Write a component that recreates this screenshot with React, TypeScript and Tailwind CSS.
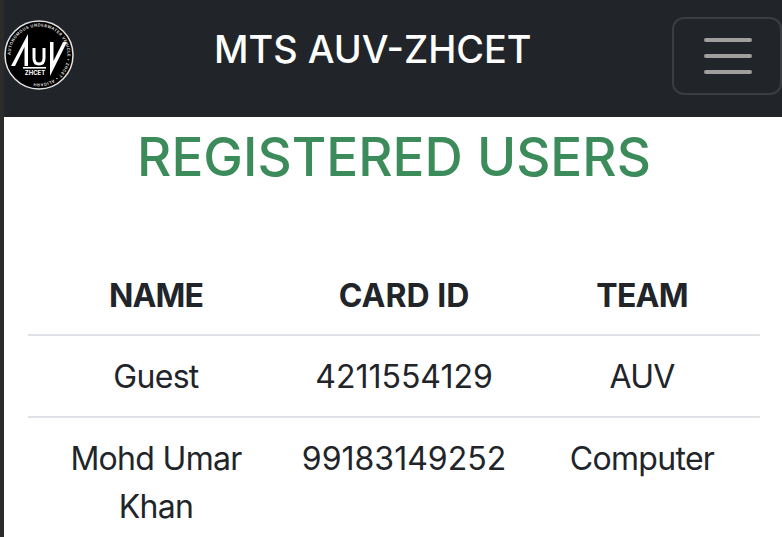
const users = [
  { name: 'Guest', cardId: '4211554129', team: 'AUV' },
  { name: 'Mohd Umar Khan', cardId: '99183149252', team: 'Computer' },
];

function Logo() {
  return (
    <svg width="70" height="70" viewBox="0 0 70 70" className="shrink-0">
      <circle cx="35" cy="35" r="34" fill="#000" stroke="#e2e2e2" strokeWidth="1.5" />
      <defs>
        <path id="ring" d="M35 35 m-28.5 0 a28.5 28.5 0 1 1 57 0 a28.5 28.5 0 1 1 -57 0" />
      </defs>
      <text fontSize="4" fontWeight="600" fill="#e8e8e8" fontFamily="Inter, sans-serif" letterSpacing="0.5">
        <textPath href="#ring">AUTONOMOUS UNDERWATER VEHICLE • ZHCET • ALIGARH</textPath>
      </text>
      <path d="M7 46 L24 14 L24 46 L20.5 46 L20.5 27 L11 46 Z" fill="#fff" />
      <path d="M63 22 L46 56 L46 22 L49.5 22 L49.5 41 L59 22 Z" fill="#fff" />
      <path d="M30 28 V38 Q30 44 35 44 Q40 44 40 38 V28" fill="none" stroke="#fff" strokeWidth="3" />
      <rect x="19" y="47" width="23" height="1.6" fill="#fff" />
      <text x="31" y="55" textAnchor="middle" fontSize="6" fontWeight="700" fill="#fff" fontFamily="Inter, sans-serif">
        ZHCET
      </text>
    </svg>
  );
}

export default function App() {
  return (
    <div className="flex h-[537px] w-[782px] overflow-hidden bg-white font-['Inter',sans-serif] text-[#212529]">
      <div className="w-[4px] shrink-0 bg-[#2b2b2b]" />
      <div className="flex min-w-0 flex-1 flex-col">
        <nav className="flex h-[117px] shrink-0 items-start bg-[#212529]">
          <div className="mt-[20px] flex w-[70px] shrink-0 items-center">
            <Logo />
          </div>
          <span className="ml-[140px] mt-[22px] whitespace-nowrap text-[37.8px] font-medium leading-[54px] text-white">
            MTS AUV-ZHCET
          </span>
          <button className="ml-auto mt-[17px] flex h-[78px] w-[110px] flex-col items-center justify-center gap-[12px] rounded-[12px] border-2 border-[#3a3d41] pl-[2px]">
            <span className="h-[4px] w-[48px] rounded-full bg-[#9f9f9f]" />
            <span className="h-[4px] w-[48px] rounded-full bg-[#9f9f9f]" />
            <span className="h-[4px] w-[48px] rounded-full bg-[#9f9f9f]" />
          </button>
        </nav>
        <h1 className="mt-[9px] pl-[2px] text-center text-[53px] font-medium leading-[62px] text-[#3c8b5a]">
          REGISTERED USERS
        </h1>
        <table className="ml-[24px] mt-[68px] w-[732px] table-fixed border-collapse text-center text-[32px] leading-[48px]">
          <colgroup>
            <col className="w-[256px]" />
            <col className="w-[240px]" />
            <col className="w-[236px]" />
          </colgroup>
          <thead>
            <tr className="border-b-2 border-[#dee2e6]">
              <th className="px-[16px] pb-[14px] pt-[16px] font-bold tracking-[-0.9px]">NAME</th>
              <th className="px-[16px] pb-[14px] pt-[16px] font-bold">CARD ID</th>
              <th className="px-[16px] pb-[14px] pt-[16px] font-bold tracking-[-0.8px]">TEAM</th>
            </tr>
          </thead>
          <tbody>
            {users.map(user => (
              <tr key={user.cardId} className="border-b-2 border-[#dee2e6] align-top">
                <td className="px-[16px] pb-[15px] pt-[17px] tracking-[-0.7px]">{user.name}</td>
                <td className="px-[16px] pb-[15px] pt-[17px]">{user.cardId}</td>
                <td className="px-[16px] pb-[15px] pt-[17px] tracking-[-0.7px]">{user.team}</td>
              </tr>
            ))}
          </tbody>
        </table>
      </div>
    </div>
  );
}
